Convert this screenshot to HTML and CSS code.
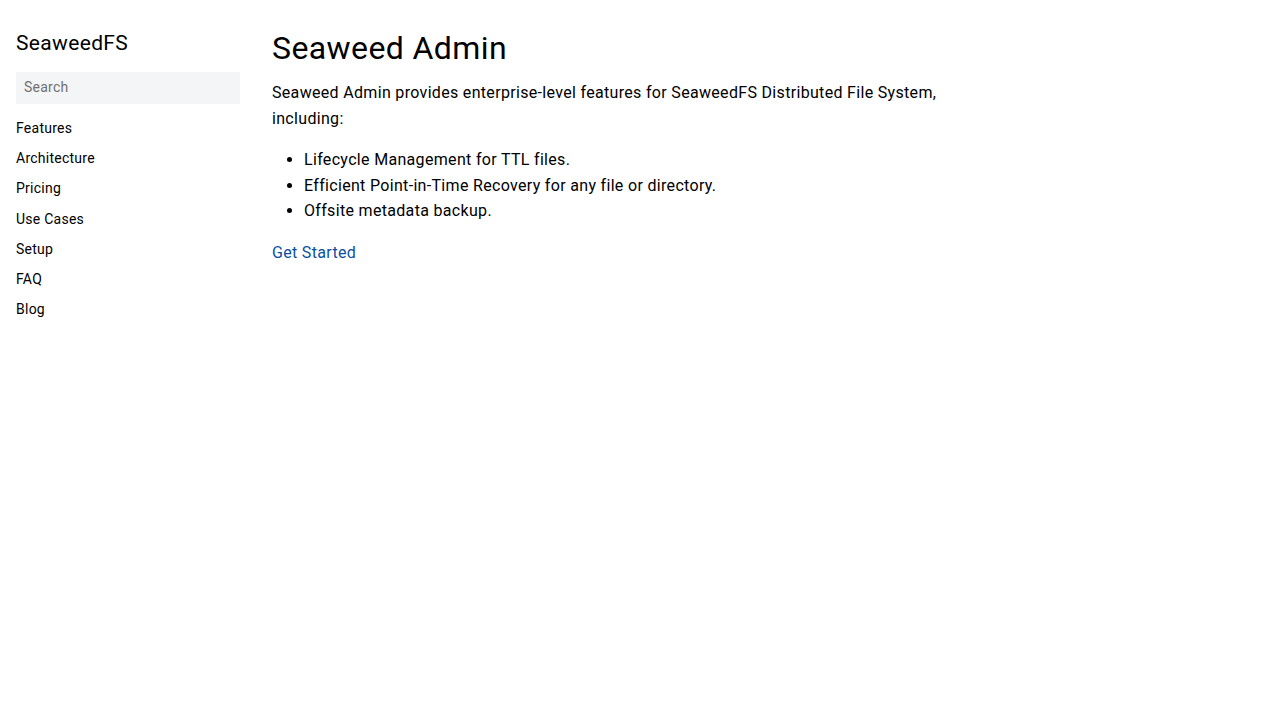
FILE: index.html
```html
<!DOCTYPE html>
<html lang="en">
<head>
<meta charset="utf-8">
<title>Seaweed Admin</title>
<link rel="stylesheet" href="styles.css">
</head>
<body>
<div class="layout">
  <aside class="sidebar">
    <div class="brand">SeaweedFS</div>
    <input class="search" type="text" placeholder="Search">
    <nav class="nav">
      <a href="#">Features</a>
      <a href="#">Architecture</a>
      <a href="#">Pricing</a>
      <a href="#">Use Cases</a>
      <a href="#">Setup</a>
      <a href="#">FAQ</a>
      <a href="#">Blog</a>
    </nav>
  </aside>
  <main class="content">
    <h1 class="title">Seaweed Admin</h1>
    <p class="lead">Seaweed Admin provides enterprise-level features for SeaweedFS Distributed File System, including:</p>
    <ul class="features">
      <li>Lifecycle Management for TTL files.</li>
      <li>Efficient Point-in-Time Recovery for any file or directory.</li>
      <li>Offsite metadata backup.</li>
    </ul>
    <a class="cta" href="#">Get Started</a>
  </main>
</div>
</body>
</html>
```
FILE: styles.css
```css
* { box-sizing: border-box; }
body {
  margin: 0;
  font-family: Roboto, "Liberation Sans", sans-serif;
  color: #000;
  background: #fff;
}
.layout {
  display: flex;
  gap: 32px;
  padding: 0 16px;
}
.sidebar {
  width: 224px;
  flex-shrink: 0;
  padding-top: 29px;
  display: flex;
  flex-direction: column;
}
.brand {
  font-size: 21px;
  line-height: 28px;
  letter-spacing: 0.35px;
  margin-bottom: 15px;
}
.search {
  width: 100%;
  height: 32px;
  border: none;
  background: #f4f5f7;
  padding: 0 8px 2px;
  font-family: inherit;
  font-size: 14px;
  letter-spacing: 0.25px;
  color: #000;
  outline: none;
}
.search::placeholder { color: #707070; }
.nav {
  display: flex;
  flex-direction: column;
  margin-top: 14px;
}
.nav a {
  color: #000;
  text-decoration: none;
  font-size: 14px;
  line-height: 20px;
  letter-spacing: 0.25px;
  margin-bottom: 10.2px;
}
.content {
  max-width: 700px;
  padding-top: 28px;
}
.title {
  font-size: 32px;
  font-weight: 400;
  line-height: 40px;
  letter-spacing: 0.4px;
  margin: 0 0 12px;
}
.lead {
  font-size: 16px;
  line-height: 26px;
  letter-spacing: 0.32px;
  margin: 0 0 15px;
}
.features {
  margin: 0 0 16px;
  padding-left: 32px;
  font-size: 16px;
  line-height: 25.5px;
  letter-spacing: 0.32px;
}
.cta {
  font-size: 16px;
  line-height: 26px;
  letter-spacing: 0.32px;
  color: #0b4f9f;
  text-decoration: none;
}
```
